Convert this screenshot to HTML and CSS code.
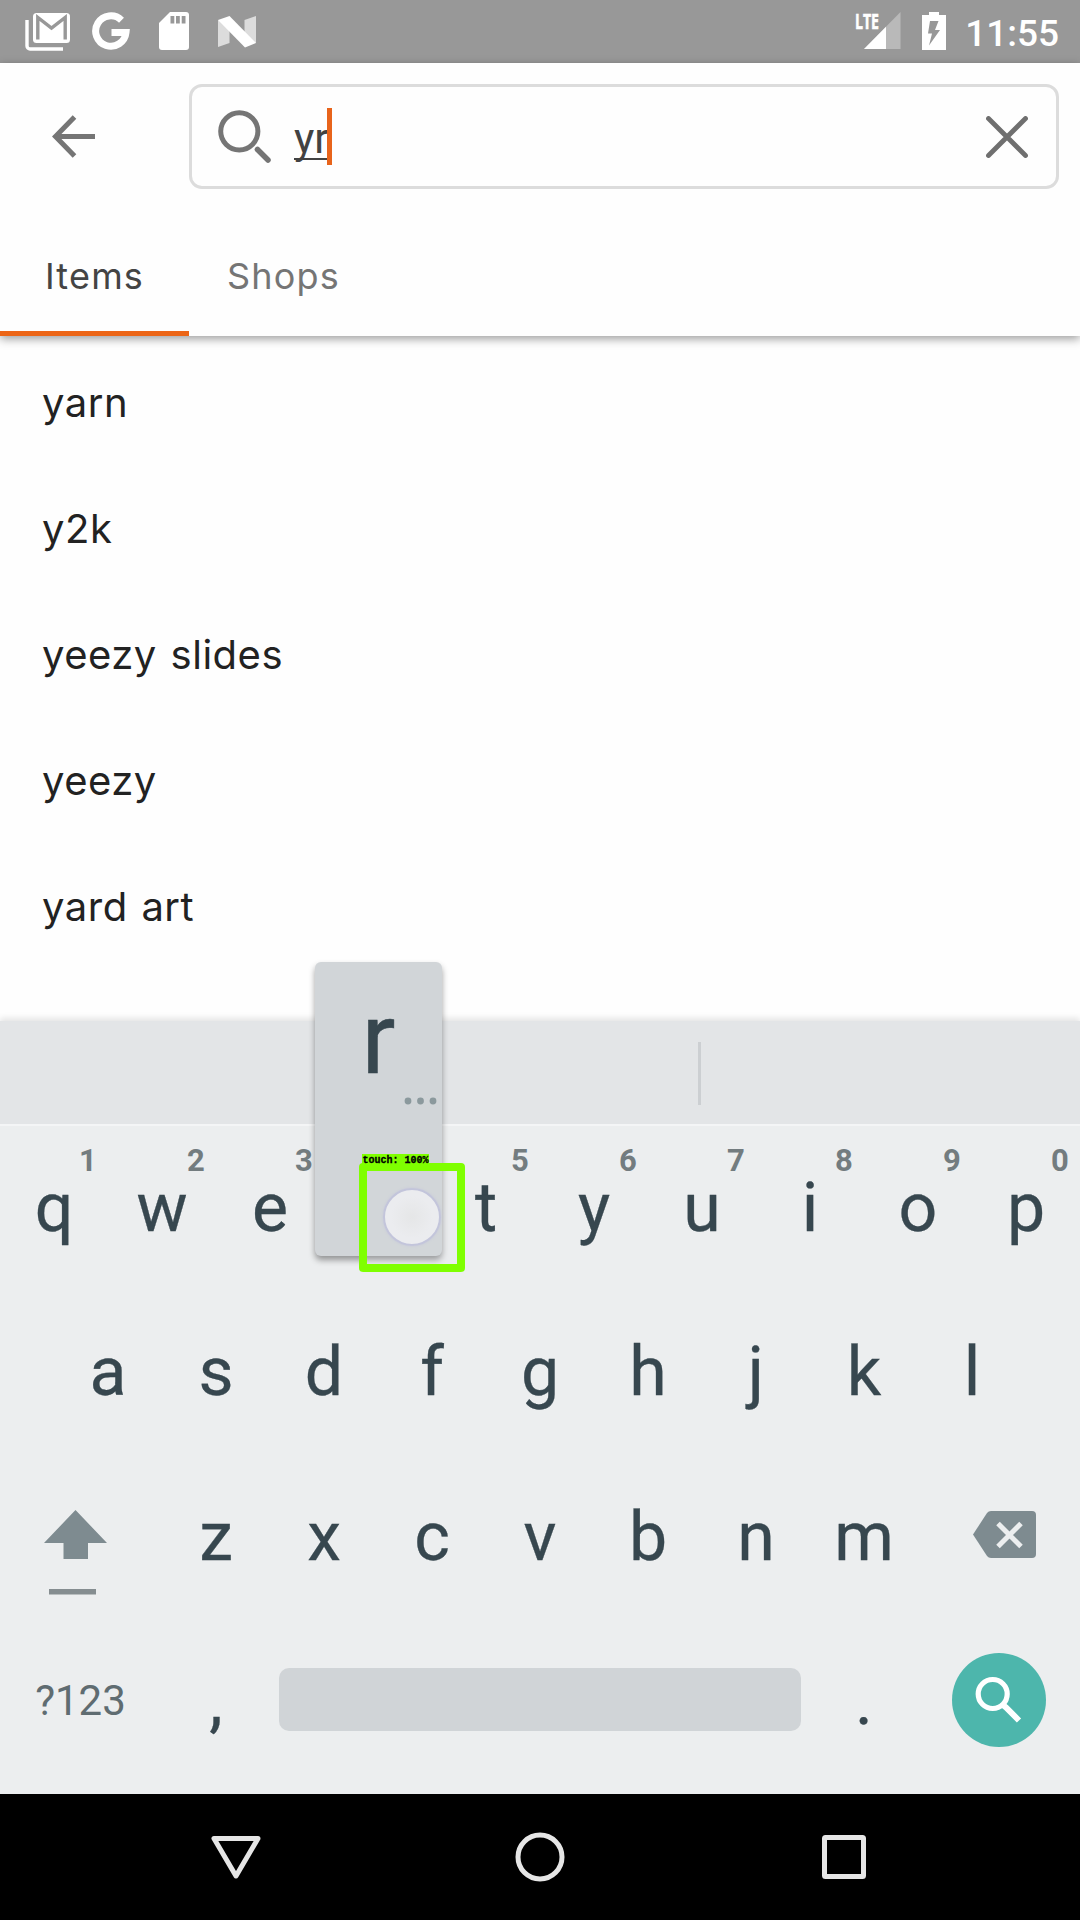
FILE: index.html
```html
<!DOCTYPE html>
<html lang="en">
<head>
<meta charset="utf-8">
<title>Search</title>
<link rel="stylesheet" href="styles.css">
</head>
<body>
<div class="screen">
  <header class="status">
    <div class="status-left">
      <svg width="46" height="40" viewBox="0 0 46 40"><path d="M3 8v26a3 3 0 0 0 3 3h33" fill="none" stroke="#fff" stroke-width="3.4"/><rect x="9" y="1" width="37" height="30" rx="3.5" fill="#fff"/><path d="M13.800 27.500V5.500L27.500 16 41.200 5.500V27.500" fill="none" stroke="#989898" stroke-width="3.4"/></svg>
      <svg class="g" width="38" height="38" viewBox="0 0 38 38"><path d="M29.500 8.200A15.200 15.200 0 1 0 34 20.500H19.500" fill="none" stroke="#fff" stroke-width="7"/></svg>
      <svg class="sd" width="30" height="38" viewBox="0 0 30 38"><path d="M11 0H27a3 3 0 0 1 3 3V35a3 3 0 0 1-3 3H3a3 3 0 0 1-3-3V11Z" fill="#fff"/><path d="M11.500 4h3.800v7.500h-3.800zM17 4h3.800v7.500H17zM22.700 4h3.800v7.500h-3.800z" fill="#989898"/></svg>
      <svg class="n" width="38" height="32" viewBox="0 0 38 32"><path d="M0 4 11.500 9V27L0 31ZM26.500 4 38 0V27L26.500 24Z" fill="#dcdcdc"/><path d="M0 4 11.500 0 38 27 27 31.500Z" fill="#fff"/></svg>
    </div>
    <div class="status-right">
      <svg class="signal" width="46" height="38" viewBox="0 0 46 38"><path d="M45.500 0V37H9Z" fill="#b9b9b9"/><path d="M31 14.700V37H9Z" fill="#fff"/><text x="0" y="16.500" textLength="24" lengthAdjust="spacingAndGlyphs" class="lte">LTE</text></svg>
      <svg class="battery" width="24" height="38" viewBox="0 0 24 38"><path d="M7 0h10v3h7v35H0V3h7z" fill="#fff"/><path d="M8 9h8.500l-3.500 9h5L7 33.500l3-12H6Z" fill="#989898"/></svg>
      <span class="time">11:55</span>
    </div>
  </header>

  <section class="header">
    <div class="search-row">
      <svg class="back" width="44" height="44" viewBox="0 0 44 44"><path d="M22.500 2 3.500 21.500 22.500 41M4 21.500H43" fill="none" stroke="#757575" stroke-width="5"/></svg>
      <div class="search-box">
        <svg class="magnifier" width="54" height="54" viewBox="0 0 54 54"><circle cx="21.300" cy="21.300" r="18.600" fill="none" stroke="#757575" stroke-width="5"/><path d="M39.500 39.500 50 50" stroke="#757575" stroke-width="5.500" stroke-linecap="round"/></svg>
        <span class="query">yr</span><span class="caret"></span>
        <svg class="clear" width="42" height="42" viewBox="0 0 42 42"><path d="M2.500 2.500 39.500 39.500M39.500 2.500 2.500 39.500" stroke="#6f6f6f" stroke-width="4.800" stroke-linecap="round"/></svg>
      </div>
    </div>
    <nav class="tabs"><span class="tab active">Items</span><span class="tab">Shops</span></nav>
  </section>

  <ul class="suggestions">
    <li>yarn</li><li>y2k</li><li>yeezy slides</li><li>yeezy</li><li>yard art</li>
  </ul>

  <section class="keyboard">
    <div class="strip"><span class="divider"></span></div>
    <div class="keys">
      <div class="row">
        <span class="key">q<sup>1</sup></span><span class="key">w<sup>2</sup></span><span class="key">e<sup>3</sup></span><span class="key pressed"><span class="popup"><b>r</b><svg class="more" width="34" height="8" viewBox="0 0 34 8"><g fill="#8b999d"><circle cx="4" cy="4" r="3.400"/><circle cx="16.500" cy="4" r="3.400"/><circle cx="29" cy="4" r="3.400"/></g></svg></span><span class="touch-box"><span class="touch-label">touch: 100%</span><span class="touch-dot"></span></span></span><span class="key">t<sup>5</sup></span><span class="key">y<sup>6</sup></span><span class="key">u<sup>7</sup></span><span class="key">i<sup>8</sup></span><span class="key">o<sup>9</sup></span><span class="key">p<sup>0</sup></span>
      </div>
      <div class="row inset">
        <span class="key">a</span><span class="key">s</span><span class="key">d</span><span class="key">f</span><span class="key">g</span><span class="key">h</span><span class="key">j</span><span class="key">k</span><span class="key">l</span>
      </div>
      <div class="row">
        <span class="key wide shift"><svg width="64" height="86" viewBox="0 0 64 86"><path d="M31.500 0 63 33H44V49H19.500V33H0Z" fill="#7e8b90"/><path d="M5 79H52V84.500H5Z" fill="#858d90"/></svg></span>
        <span class="key">z</span><span class="key">x</span><span class="key">c</span><span class="key">v</span><span class="key">b</span><span class="key">n</span><span class="key">m</span>
        <span class="key wide delete"><svg width="63" height="47" viewBox="0 0 63 47"><path d="M18 0H59a4 4 0 0 1 4 4V43a4 4 0 0 1-4 4H18Q15.500 47 14 45L0 23.500 14 2Q15.500 0 18 0Z" fill="#7e8b90"/><path d="M25 12.500 48 35.500M48 12.500 25 35.500" stroke="#eceeef" stroke-width="5"/></svg></span>
      </div>
      <div class="row bottom">
        <span class="key wide symbols">?123</span><span class="key">,</span><span class="space"></span><span class="key">.</span>
        <span class="key wide enter"><svg width="94" height="94" viewBox="0 0 94 94"><circle cx="47" cy="47" r="47" fill="#4db6ac"/><circle cx="40.700" cy="41" r="14.500" fill="none" stroke="#fff" stroke-width="5.200"/><path d="M51 52 54 54.500 67 67.500" fill="none" stroke="#fff" stroke-width="6"/></svg></span>
      </div>
    </div>
  </section>

  <footer class="nav">
    <svg width="50" height="50" viewBox="0 0 50 50"><path d="M3 6.500H47L25 44Z"/></svg>
    <svg width="50" height="50" viewBox="0 0 50 50"><circle cx="25" cy="25" r="22"/></svg>
    <svg width="50" height="50" viewBox="0 0 50 50"><rect x="5.500" y="5.500" width="39" height="39" rx="1"/></svg>
  </footer>
</div>
</body>
</html>
```
FILE: styles.css
```css
* { box-sizing: border-box; }
body { margin: 0; background: #fefefe; font-family: Roboto, sans-serif; }
svg { display: block; flex: none; }
.screen { width: 1080px; height: 1920px; display: flex; flex-direction: column; overflow: hidden; }

.status { height: 63px; flex: none; background: #989898; display: flex; justify-content: space-between; padding: 12px 21px 0 24px; color: #fff; }
.status-left, .status-right { display: flex; align-items: flex-start; }
.g { margin-left: 21.500px; }
.sd { margin-left: 29.500px; }
.n { margin: 4px 0 0 29px; }
.signal { margin-right: 21px; overflow: visible; }
.lte { font: 700 21px "Open Sans", sans-serif; fill: #fff; stroke: #fff; stroke-width: .6px; }
.battery { margin-right: 19.500px; }
.time { font-size: 37px; font-weight: 500; line-height: 43px; }

.header { height: 273px; flex: none; background: #fefefe; box-shadow: 0 3px 9px rgba(0, 0, 0, .38); z-index: 1; display: flex; flex-direction: column; justify-content: space-between; }
.search-row { display: flex; align-items: center; padding: 21px 21px 0 52px; }
.search-box { margin-left: 93px; flex: 1; height: 105px; border: 3px solid #dcdcdc; border-radius: 13px; display: flex; align-items: center; padding: 0 28.500px 0 26px; }
.magnifier { margin-right: 22px; }
.query { font-size: 43px; line-height: 50px; color: #424242; height: 50px; text-decoration: underline; text-decoration-thickness: 2px; text-underline-offset: 5px; text-decoration-skip-ink: none; margin-top: 3px; width: 33px; }
.caret { width: 5px; height: 57px; background: #e8641b; }
.clear { margin-left: auto; }
.tabs { display: flex; height: 121px; font: 36px/123px Inter, sans-serif; letter-spacing: 1.2px; color: #757575; }
.tab { width: 189px; height: 121px; text-align: center; }
.active { color: #444; border-bottom: 5px solid #ec6516; }

.suggestions { list-style: none; margin: 0; padding: 4px 0 0 42px; flex: 1; font: 40px/126px Inter, sans-serif; letter-spacing: .5px; word-spacing: 2px; color: #222; }
.suggestions li { height: 126px; }

.keyboard { height: 773px; flex: none; background: #eceeef; box-shadow: 0 -3px 6px rgba(0, 0, 0, .1); display: flex; flex-direction: column; }
.strip { height: 104px; background: #e3e5e7; display: flex; align-items: center; padding-left: 698px; }
.divider { width: 3px; height: 63px; background: #cccfd2; }
.keys { border-top: 2px solid #f4f5f6; margin-top: -1px; color: #37474f; }
.row { display: flex; height: 164.7px; font-size: 68px; line-height: 165px; -webkit-text-stroke: .3px; }
.inset { padding: 0 54px; }
.key { width: 108px; text-align: center; position: relative; display: flex; justify-content: center; align-items: center; }
.inset .key, .bottom .key { padding-bottom: 2px; }
.key sup { position: absolute; left: 68px; top: 17px; width: 40px; text-align: center; font-size: 31px; line-height: 36px; font-weight: 700; color: #737c7f; -webkit-text-stroke: 0; }
.row .wide { width: 162px; }
.row .shift { justify-content: flex-start; padding: 30px 0 0 44px; }
.row .delete { justify-content: flex-end; padding: 0 44px 6px 0; }
.row .symbols { font-size: 42px; color: #5f6c71; padding: 0 1px 4px 0; -webkit-text-stroke: 0; }
.space { width: 522px; height: 63px; margin: 48px 9px 0; border-radius: 10px; background: #d0d4d7; }
.row .enter { justify-content: flex-end; padding: 0 34px 4px 0; }

/* Key preview floats above the pressed key */
.popup { position: absolute; left: -9px; top: -164px; width: 127px; height: 294px; border-radius: 6px; background: #d1d5d8; box-shadow: 0 4px 6px rgba(0, 0, 0, .38); z-index: 2; display: flex; flex-direction: column; line-height: 120px; padding-top: 17px; }
.popup b { font-size: 100px; font-weight: 400; -webkit-text-stroke: .5px #37474f; height: 118px; }
.more { align-self: flex-end; margin-right: 4.500px; }

/* Touch indicator overlay */
.touch-box { position: absolute; left: 35px; top: 37px; width: 106px; height: 109px; border: 8px solid #7fff00; border-radius: 4px; z-index: 3; background: rgba(225, 225, 230, .12); }
.touch-label { position: absolute; left: -5px; top: -17px; width: 67px; height: 13px; background: #7fff00; color: #000; font: 700 10px/14px "Liberation Mono", monospace; white-space: nowrap; }
.touch-dot { position: absolute; left: 16px; top: 16.500px; width: 58px; height: 58px; border-radius: 50%; border: 2px solid #c3c5db; background: radial-gradient(#e5e6e7, #ebecef 55%); box-shadow: 0 0 3px #c6c8da; }

.nav { height: 126px; flex: none; background: #000; display: flex; justify-content: center; gap: 254px; align-items: center; }
.nav svg { fill: none; stroke: #e6e6e6; stroke-width: 5; stroke-linejoin: round; }
```
